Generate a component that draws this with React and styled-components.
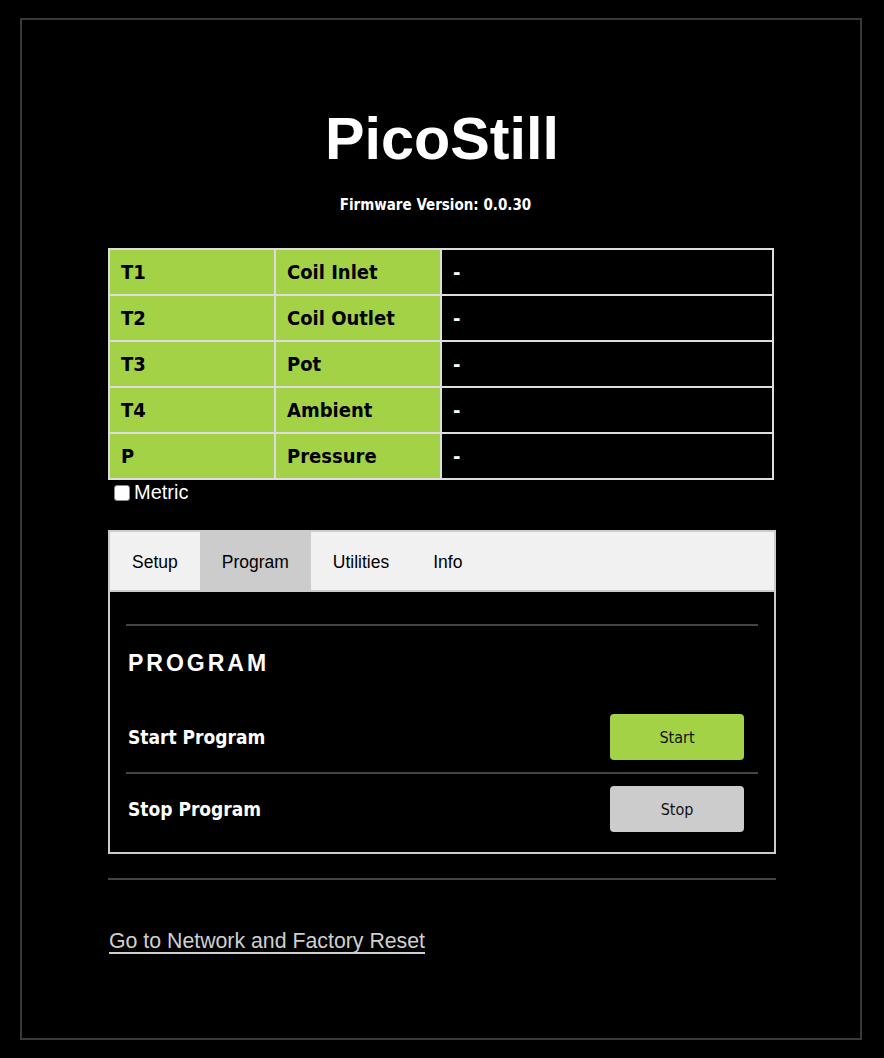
import React, { useState } from 'react';
import styled, { createGlobalStyle } from 'styled-components';

const Global = createGlobalStyle`
  html, body { margin: 0; padding: 0; background: #000; }
  body {
    font-family: "DejaVu Sans Condensed", "DejaVu Sans", sans-serif;
    color: #fff;
  }
  * { box-sizing: border-box; }
`;

const Page = styled.div`
  padding: 18px 22px 18px 20px;
`;

const Frame = styled.div`
  border: 2px solid #3a3a3a;
  height: 1022px;
  padding-left: 2px;
  display: flex;
  flex-direction: column;
  align-items: center;
`;

const Content = styled.div`
  width: 668px;
  padding-top: 85px;
  display: flex;
  flex-direction: column;
`;

const Title = styled.h1`
  margin: 0;
  font-family: "Liberation Sans", Arial, sans-serif;
  font-weight: bold;
  font-size: 59.3px;
  line-height: 67px;
  text-align: center;
`;

const Firmware = styled.div`
  margin-top: 24px;
  font-weight: bold;
  font-size: 15px;
  line-height: 18px;
  text-align: center;
  padding-right: 13px;
`;

const Table = styled.table`
  margin-top: 34px;
  width: 666px;
  border-collapse: separate;
  border-spacing: 0;
  border: 1px solid #ddd;
  table-layout: fixed;
`;

const Cell = styled.td`
  border: 1px solid #ddd;
  padding: 11px 10px 10px 11px;
  line-height: 23px;
  font-size: 20px;
  font-weight: bold;
  color: ${p => (p.$value ? '#fff' : '#000')};
  background: ${p => (p.$value ? '#000' : '#a3d246')};
  width: ${p => (p.$value ? '50%' : '25%')};
`;

const MetricLabel = styled.label`
  margin-top: 1px;
  display: flex;
  align-items: center;
  font-family: "Liberation Sans", Arial, sans-serif;
  font-size: 20px;
  line-height: 23px;
  color: #fff;
`;

const Check = styled.input`
  appearance: none;
  width: 16px;
  height: 16px;
  margin: 1px 4px 0 6px;
  background: #fff;
  border: 1px solid #8a8a8a;
  border-radius: 3px;
`;

const Panel = styled.div`
  margin-top: 26px;
  border: 2px solid #ccc;
`;

const TabBar = styled.div`
  display: flex;
  background: #f1f1f1;
  border-bottom: 2px solid #ccc;
`;

const Tab = styled.button`
  height: 58px;
  padding: 2px 22px 0;
  border: none;
  margin: 0;
  background: ${p => (p.$active ? '#ccc' : 'transparent')};
  font-family: "Liberation Sans", Arial, sans-serif;
  font-size: 17.5px;
  color: #000;
  cursor: pointer;
`;

const TabBody = styled.div`
  padding: 32px 16px 8px;
  background: #000;
`;

const Rule = styled.div`
  height: 2px;
  background: #444;
`;

const Heading = styled.h2`
  margin: 25px 0 0 2px;
  font-family: "Liberation Sans", Arial, sans-serif;
  font-size: 23px;
  font-weight: bold;
  letter-spacing: 3px;
  line-height: 25px;
`;

const Rows = styled.div`
  margin-top: 26px;
`;

const Row = styled.div`
  display: flex;
  align-items: center;
  justify-content: space-between;
  padding: 12px 14px 12px 2px;
  border-bottom: ${p => (p.$last ? 'none' : '2px solid #444')};
`;

const RowLabel = styled.span`
  font-size: 19px;
  font-weight: bold;
  line-height: 23px;
`;

const ActionButton = styled.button`
  width: 134px;
  height: 46px;
  border: none;
  border-radius: 4px;
  background: ${p => (p.$green ? '#a3d246' : '#cccccc')};
  font-family: "DejaVu Sans Condensed", "DejaVu Sans", sans-serif;
  font-size: 16px;
  color: #111;
  cursor: pointer;
`;

const BottomRule = styled.div`
  margin-top: 24px;
  height: 2px;
  background: #444;
`;

const LinkLine = styled.div`
  margin-top: 49px;
  padding-left: 1px;
  font-family: "Liberation Sans", Arial, sans-serif;
  font-size: 21.3px;
  line-height: 24px;
`;

const Link = styled.a`
  color: #cfcfcf;
  text-decoration: underline;
  text-decoration-thickness: 2px;
  text-underline-offset: 4px;
`;

const sensors = [
  ['T1', 'Coil Inlet'],
  ['T2', 'Coil Outlet'],
  ['T3', 'Pot'],
  ['T4', 'Ambient'],
  ['P', 'Pressure'],
];

const tabs = ['Setup', 'Program', 'Utilities', 'Info'];

export default function App() {
  const [active, setActive] = useState('Program');
  const [metric, setMetric] = useState(false);
  return (
    <Page>
      <Global />
      <Frame>
        <Content>
          <Title>PicoStill</Title>
          <Firmware>Firmware Version: 0.0.30</Firmware>
          <Table>
            <tbody>
              {sensors.map(([id, name]) => (
                <tr key={id}>
                  <Cell>{id}</Cell>
                  <Cell>{name}</Cell>
                  <Cell $value>-</Cell>
                </tr>
              ))}
            </tbody>
          </Table>
          <MetricLabel>
            <Check type="checkbox" checked={metric} onChange={e => setMetric(e.target.checked)} />
            Metric
          </MetricLabel>
          <Panel>
            <TabBar>
              {tabs.map(t => (
                <Tab key={t} $active={t === active} onClick={() => setActive(t)}>
                  {t}
                </Tab>
              ))}
            </TabBar>
            <TabBody>
              <Rule />
              <Heading>PROGRAM</Heading>
              <Rows>
                <Row>
                  <RowLabel>Start Program</RowLabel>
                  <ActionButton $green>Start</ActionButton>
                </Row>
                <Row $last>
                  <RowLabel>Stop Program</RowLabel>
                  <ActionButton>Stop</ActionButton>
                </Row>
              </Rows>
            </TabBody>
          </Panel>
          <BottomRule />
          <LinkLine>
            <Link href="#">Go to Network and Factory Reset</Link>
          </LinkLine>
        </Content>
      </Frame>
    </Page>
  );
}
